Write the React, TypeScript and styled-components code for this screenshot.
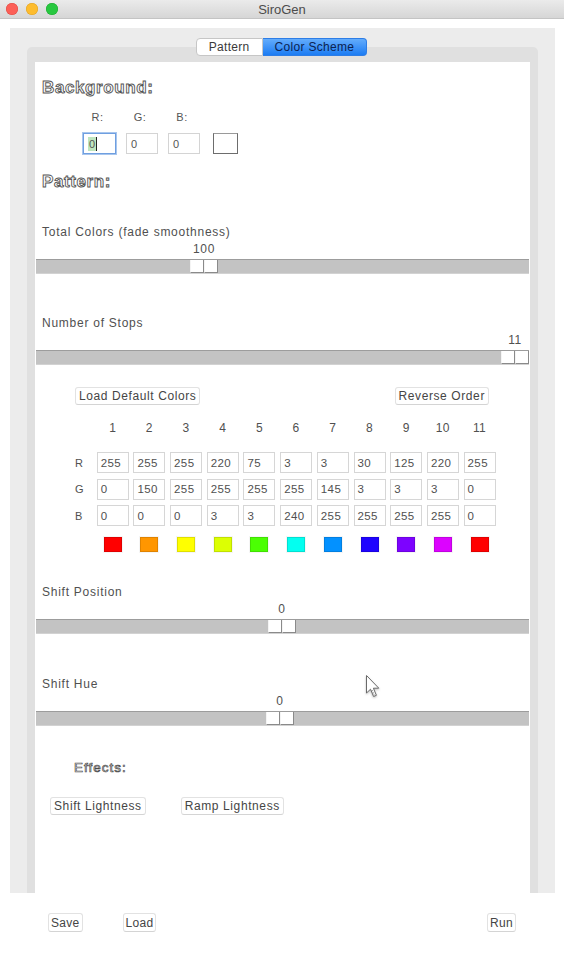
import React from "react";
import styled, { createGlobalStyle } from "styled-components";

const GlobalStyle = createGlobalStyle`
  html, body {
    margin: 0;
    padding: 0;
    background: #ffffff;
  }
  body {
    font-family: "Liberation Sans", Arial, sans-serif;
    font-size: 12px;
    color: #505050;
  }
`;

const stops = [
  [255, 0, 0],
  [255, 150, 0],
  [255, 255, 0],
  [220, 255, 3],
  [75, 255, 3],
  [3, 255, 240],
  [3, 145, 255],
  [30, 3, 255],
  [125, 3, 255],
  [220, 3, 255],
  [255, 0, 0],
];

const TRACK = 493;
const THUMB = 28;

const Slider: React.FC<{ label: string; value: string; pos: number; gap: number }> = ({
  label,
  value,
  pos,
  gap,
}) => {
  const left = Math.round(pos * (TRACK - THUMB));
  return (
    <SliderBlock style={{ marginTop: gap }}>
      <SectionLabel>{label}</SectionLabel>
      <ValueRow style={{ paddingLeft: left }}>
        <ValueText>{value}</ValueText>
      </ValueRow>
      <Track>
        <Thumb style={{ left }}>
          <ThumbCell />
          <ThumbCell />
        </Thumb>
      </Track>
    </SliderBlock>
  );
};

const App: React.FC = () => {
  return (
    <Window>
      <GlobalStyle />
      <TitleBar>
        <Lights>
          <Light color="#fc5f57" edge="#de4a42" />
          <Light color="#fdbc2e" edge="#dea125" />
          <Light color="#28c840" edge="#1fa82f" />
        </Lights>
        <Title>SiroGen</Title>
      </TitleBar>

      <Body>
        <OuterPanel>
          <TabBar>
            <Tab>Pattern</Tab>
            <Tab active>Color Scheme</Tab>
          </TabBar>
          <InnerPanel>
            <Content>
              <Heading style={{ marginTop: 16 }}>Background:</Heading>
              <BgGrid>
                <BgLabel>R:</BgLabel>
                <BgLabel>G:</BgLabel>
                <BgLabel>B:</BgLabel>
                <span />
                <BgInput focused>
                  <Selected>0</Selected>
                  <Caret />
                </BgInput>
                <BgInput>0</BgInput>
                <BgInput>0</BgInput>
                <BgSwatch />
              </BgGrid>

              <Heading style={{ marginTop: 18 }}>Pattern:</Heading>

              <Slider label="Total Colors (fade smoothness)" value="100" pos={0.331} gap={33} />
              <Slider label="Number of Stops" value="11" pos={1} gap={42} />

              <ButtonRow>
                <Button>Load Default Colors</Button>
                <Button>Reverse Order</Button>
              </ButtonRow>

              <StopGrid>
                <span />
                {stops.map((_, i) => (
                  <ColNum key={"n" + i}>{i + 1}</ColNum>
                ))}
                {["R", "G", "B"].map((ch, c) => (
                  <React.Fragment key={ch}>
                    <RowLabel>{ch}</RowLabel>
                    {stops.map((s, i) => (
                      <Cell key={ch + i}>{s[c]}</Cell>
                    ))}
                  </React.Fragment>
                ))}
                <span />
                {stops.map((s, i) => (
                  <SwatchWrap key={"s" + i}>
                    <Swatch style={{ background: `rgb(${s[0]},${s[1]},${s[2]})` }} />
                  </SwatchWrap>
                ))}
              </StopGrid>

              <Slider label="Shift Position" value="0" pos={0.499} gap={33} />
              <Slider label="Shift Hue" value="0" pos={0.495} gap={43} />

              <EffectsLabel>Effects:</EffectsLabel>
              <EffectsRow>
                <Button>Shift Lightness</Button>
                <Button>Ramp Lightness</Button>
              </EffectsRow>
            </Content>
          </InnerPanel>
        </OuterPanel>

        <BottomBar>
          <BottomLeft>
            <Button small>Save</Button>
            <Button small>Load</Button>
          </BottomLeft>
          <Button small>Run</Button>
        </BottomBar>
      </Body>

      <Cursor width="16" height="26" viewBox="0 0 16 26">
        <path
          d="M1.5 1.5 L1.5 19 L5.5 15.2 L8.6 22.5 L11.4 21.3 L8.4 14.2 L13.8 14.2 Z"
          fill="#ffffff"
          stroke="#6a6a6a"
          strokeWidth="1"
          strokeLinejoin="round"
        />
        <path d="M7 16 L9.6 21.6" stroke="#555" strokeWidth="0.8" strokeDasharray="1 1" />
      </Cursor>
    </Window>
  );
};

export default App;

const Window = styled.div`
  position: relative;
  width: 564px;
  height: 960px;
  overflow: hidden;
  background: #ffffff;
`;

const TitleBar = styled.div`
  position: relative;
  height: 19px;
  box-sizing: border-box;
  display: flex;
  align-items: center;
  justify-content: center;
  background: linear-gradient(#ebebeb, #d6d6d6);
  border-bottom: 1px solid #c4c4c4;
`;

const Lights = styled.div`
  position: absolute;
  left: 6px;
  top: 3px;
  display: flex;
  gap: 8px;
`;

const Light = styled.span<{ color: string; edge: string }>`
  width: 12px;
  height: 12px;
  border-radius: 50%;
  background: ${(p) => p.color};
  box-shadow: inset 0 0 0 0.5px ${(p) => p.edge};
`;

const Title = styled.div`
  font-family: "Liberation Sans", Arial, sans-serif;
  font-size: 13px;
  color: #4c4c4c;
`;

const Body = styled.div`
  padding: 9px 9px 0 10px;
  display: flex;
  flex-direction: column;
`;

const OuterPanel = styled.div`
  height: 865px;
  box-sizing: border-box;
  background: #ececec;
  padding: 10px 17px 0 17px;
  display: flex;
  flex-direction: column;
`;

const TabBar = styled.div`
  position: relative;
  z-index: 2;
  display: flex;
  justify-content: center;
  height: 18px;
  margin-left: -2px;
`;

const Tab = styled.div<{ active?: boolean }>`
  height: 18px;
  box-sizing: border-box;
  padding: 0 12px;
  display: flex;
  align-items: center;
  font-size: 12px;
  letter-spacing: 0.3px;
  color: ${(p) => (p.active ? "#0d2350" : "#3a3a3a")};
  background: ${(p) => (p.active ? "linear-gradient(#63acfc, #1c7cf3)" : "#ffffff")};
  border: 1px solid ${(p) => (p.active ? "#2d7de6" : "#c6c6c6")};
  border-radius: ${(p) => (p.active ? "0 4px 4px 0" : "4px 0 0 4px")};
  border-left-width: ${(p) => (p.active ? 0 : 1)}px;
`;

const InnerPanel = styled.div`
  flex: 1;
  margin-top: -9px;
  padding: 15px 8px 0 8px;
  background: #e0e0e0;
  border-radius: 5px 5px 0 0;
  display: flex;
  flex-direction: column;
`;

const Content = styled.div`
  flex: 1;
  background: #ffffff;
  padding: 0 1px;
  display: flex;
  flex-direction: column;
  position: relative;
`;

const Heading = styled.div`
  height: 20px;
  line-height: 20px;
  padding-left: 6px;
  font-family: "Liberation Sans", Arial, sans-serif;
  font-size: 17px;
  font-weight: bold;
  letter-spacing: 0.6px;
  color: #ffffff;
  -webkit-text-stroke: 0.9px #555555;
`;

const BgGrid = styled.div`
  display: grid;
  grid-template-columns: 33px 32px 32px 25px;
  column-gap: 10px;
  grid-template-rows: 14px 21px;
  row-gap: 9px;
  margin: 12px 0 0 47px;
  & > :nth-child(8) {
    margin-left: 3px;
  }
`;

const BgLabel = styled.div`
  font-size: 11px;
  line-height: 14px;
  text-align: center;
  letter-spacing: 0.5px;
  color: #555;
  padding-right: 4px;
`;

const BgInput = styled.div<{ focused?: boolean }>`
  box-sizing: border-box;
  height: 21px;
  display: flex;
  align-items: center;
  padding-left: 4px;
  font-size: 11px;
  color: #555;
  background: #fff;
  border: 1px solid ${(p) => (p.focused ? "#6f9fe0" : "#d4d4d4")};
  box-shadow: ${(p) => (p.focused ? "0 0 0 1px #a8c6ee" : "none")};
`;

const Selected = styled.span`
  background: #bfe6bf;
  line-height: 14px;
  padding: 0 1px;
`;

const Caret = styled.span`
  width: 1px;
  height: 14px;
  background: #222;
`;

const BgSwatch = styled.div`
  box-sizing: border-box;
  width: 25px;
  height: 21px;
  background: #ffffff;
  border: 1px solid #6d6d6d;
  border-top-color: #9a9a9a;
`;

const SliderBlock = styled.div`
  display: flex;
  flex-direction: column;
`;

const SectionLabel = styled.div`
  height: 14px;
  line-height: 14px;
  padding-left: 6px;
  font-size: 12px;
  letter-spacing: 0.75px;
  color: #505050;
`;

const ValueRow = styled.div`
  margin-top: 3px;
  height: 14px;
  display: flex;
`;

const ValueText = styled.div`
  width: 28px;
  text-align: center;
  font-size: 12px;
  line-height: 14px;
  letter-spacing: 0.6px;
  color: #505050;
`;

const Track = styled.div`
  position: relative;
  margin-top: 3px;
  height: 15px;
  box-sizing: border-box;
  background: #c3c3c3;
  border-top: 1px solid #9c9c9c;
  border-bottom: 1px solid #d2d2d2;
`;

const Thumb = styled.div`
  position: absolute;
  top: 0;
  width: 28px;
  height: 13px;
  display: flex;
`;

const ThumbCell = styled.div`
  flex: 1;
  box-sizing: border-box;
  background: #ffffff;
  border-right: 1px solid #8a8a8a;
  border-bottom: 1px solid #8a8a8a;
  border-left: 1px solid #f4f4f4;
`;

const ButtonRow = styled.div`
  display: flex;
  justify-content: space-between;
  margin-top: 22px;
  padding: 0 40px 0 39px;
`;

const Button = styled.div<{ small?: boolean }>`
  height: ${(p) => (p.small ? 19 : 18)}px;
  box-sizing: border-box;
  padding: 0 ${(p) => (p.small ? 2 : 3)}px;
  display: flex;
  align-items: center;
  font-size: 12px;
  letter-spacing: ${(p) => (p.small ? 0.3 : 0.6)}px;
  color: #454545;
  background: #ffffff;
  border: 1px solid #e2e2e2;
  border-bottom-color: #d4d4d4;
  border-radius: 3px;
`;

const StopGrid = styled.div`
  display: grid;
  grid-template-columns: 20px repeat(11, 32px);
  grid-template-rows: 25.5px 21px 21px 21px 20.5px;
  column-gap: 4.7px;
  row-gap: 5.5px;
  margin: 16px 0 0 36px;
`;

const ColNum = styled.div`
  text-align: center;
  font-size: 12px;
  line-height: 14px;
  letter-spacing: 0.4px;
  color: #505050;
`;

const RowLabel = styled.div`
  display: flex;
  align-items: center;
  padding-left: 3px;
  font-size: 11px;
  color: #505050;
`;

const Cell = styled.div`
  box-sizing: border-box;
  height: 21px;
  display: flex;
  align-items: center;
  padding-left: 3px;
  font-size: 11.5px;
  letter-spacing: 0.4px;
  color: #505050;
  background: #ffffff;
  border: 1px solid #d6d6d6;
`;

const SwatchWrap = styled.div`
  display: flex;
  justify-content: center;
  padding-top: 5.5px;
`;

const Swatch = styled.div`
  width: 18px;
  height: 15px;
  box-shadow: inset 0 0 0 1px rgba(0, 0, 0, 0.12), 0 0 0 1px rgba(0, 0, 0, 0.04);
`;

const EffectsLabel = styled.div`
  margin-top: 34px;
  padding-left: 38px;
  height: 16px;
  line-height: 16px;
  font-size: 13.5px;
  letter-spacing: 1px;
  color: #ffffff;
  -webkit-text-stroke: 0.7px #4a4a4a;
`;

const EffectsRow = styled.div`
  display: flex;
  gap: 35px;
  margin-top: 21px;
  padding-left: 14px;
`;

const BottomBar = styled.div`
  display: flex;
  justify-content: space-between;
  align-items: center;
  padding: 20px 39px 0 38px;
`;

const BottomLeft = styled.div`
  display: flex;
  gap: 40px;
`;

const Cursor = styled.svg`
  position: absolute;
  left: 365px;
  top: 674px;
  filter: drop-shadow(0 1px 1px rgba(0, 0, 0, 0.25));
`;
